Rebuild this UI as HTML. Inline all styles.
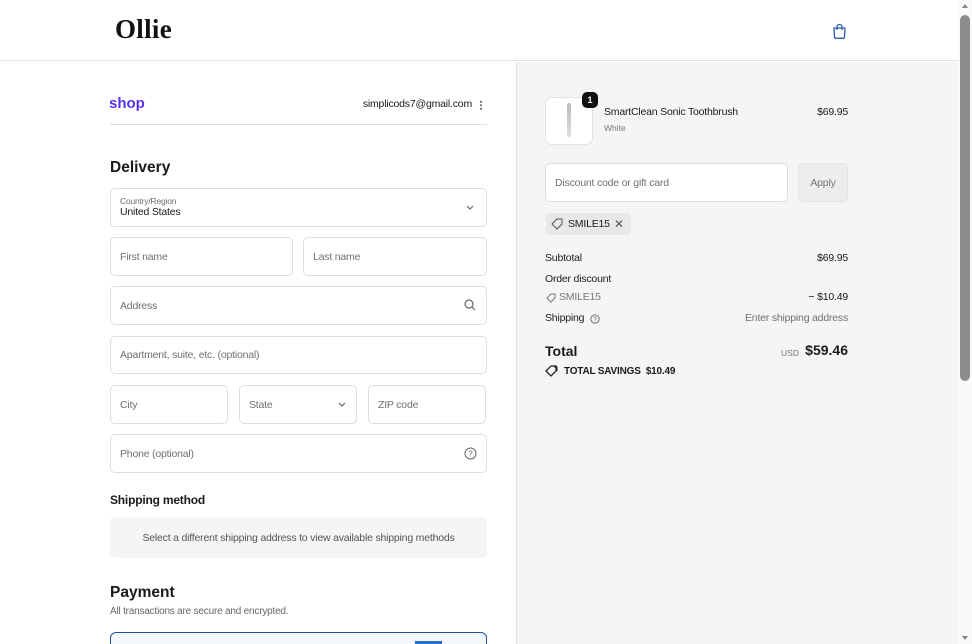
<!DOCTYPE html>
<html><head><meta charset="utf-8"><style>
*{box-sizing:border-box;margin:0;padding:0}
html,body{width:972px;height:644px;overflow:hidden}
body{background:#fff;font-family:"Liberation Sans","DejaVu Sans",sans-serif;color:#1a1a1a;position:relative}
.a{position:absolute;white-space:nowrap}
.inp{position:absolute;border:1px solid #dedede;border-radius:5px;background:#fff;font-size:10.5px;color:#707070;padding-left:9px;display:flex;align-items:center;letter-spacing:-0.2px}
.t11{font-size:10.5px;letter-spacing:-0.2px}
.r{text-align:right}
</style></head><body>
<div class="a" style="left:0;top:0;width:958px;height:61px;border-bottom:1px solid #e1e1e1;background:#fff"></div>
<div class="a" style="left:115px;top:14px;font-family:'Liberation Serif',serif;font-size:27px;font-weight:bold;letter-spacing:0.3px;color:#111">Ollie</div>
<svg class="a" style="left:832px;top:23px" width="15" height="16" viewBox="0 0 15 16"><path d="M2 5h11l-.5 9a1.5 1.5 0 0 1-1.5 1.3H4A1.5 1.5 0 0 1 2.5 14z" fill="none" stroke="#2a5db0" stroke-width="1.3"/><path d="M5 7V4a2.5 2.5 0 0 1 5 0v3" fill="none" stroke="#2a5db0" stroke-width="1.3"/></svg>
<div class="a" style="left:516px;top:62px;width:442px;height:582px;background:#f5f5f5;border-left:1px solid #e1e1e1"></div>
<div class="a" style="left:958px;top:0;width:14px;height:644px;background:#fafafa"></div>
<div class="a" style="left:960px;top:15px;width:10px;height:366px;background:#8c8c8c;border-radius:5px"></div>
<div class="a" style="left:962px;top:4px;width:0;height:0;border:3px solid transparent;border-bottom:4px solid #888;border-top:0"></div>
<div class="a" style="left:962px;top:636px;width:0;height:0;border:3px solid transparent;border-top:4px solid #888;border-bottom:0"></div>

<div class="a" style="left:109px;top:95px;font-size:15px;font-weight:bold;color:#5a31f4">shop</div>
<div class="a t11 r" style="right:500px;top:98px;color:#1a1a1a">simplicods7@gmail.com</div>
<div class="a" style="left:480px;top:100px;width:2px;height:10px;background:radial-gradient(circle,#666 45%,transparent 55%) 0 0/2px 3.5px repeat-y"></div>
<div class="a" style="left:110px;top:124px;width:377px;height:1px;background:#dedede"></div>

<div class="a" style="left:110px;top:159px;font-size:15.5px;font-weight:bold">Delivery</div>
<div class="inp" style="left:110px;top:188px;width:377px;height:39px;display:block;padding-top:7px">
<div style="font-size:8.5px;color:#707070">Country/Region</div><div style="color:#1a1a1a;font-size:10.5px">United States</div></div>
<svg class="a" style="left:466px;top:205px" width="8" height="6"><path d="M1 1l3 3 3-3" fill="none" stroke="#666" stroke-width="1.2"/></svg>
<div class="inp" style="left:110px;top:237px;width:183px;height:39px">First name</div>
<div class="inp" style="left:303px;top:237px;width:184px;height:39px">Last name</div>
<div class="inp" style="left:110px;top:286px;width:377px;height:39px">Address</div>
<svg class="a" style="left:464px;top:299px" width="12" height="12"><circle cx="5" cy="5" r="4" fill="none" stroke="#666" stroke-width="1.2"/><path d="M8 8l3 3" stroke="#666" stroke-width="1.2"/></svg>
<div class="inp" style="left:110px;top:336px;width:377px;height:38px">Apartment, suite, etc. (optional)</div>
<div class="inp" style="left:110px;top:385px;width:118px;height:39px">City</div>
<div class="inp" style="left:239px;top:385px;width:118px;height:39px">State</div>
<svg class="a" style="left:338px;top:402px" width="8" height="6"><path d="M1 1l3 3 3-3" fill="none" stroke="#666" stroke-width="1.2"/></svg>
<div class="inp" style="left:368px;top:385px;width:118px;height:39px">ZIP code</div>
<div class="inp" style="left:110px;top:434px;width:377px;height:39px">Phone (optional)</div>
<svg class="a" style="left:464px;top:447px" width="13" height="13"><circle cx="6.5" cy="6.5" r="5.5" fill="none" stroke="#666" stroke-width="1"/><text x="6.5" y="9.5" font-size="8" text-anchor="middle" fill="#666" font-family="Liberation Sans">?</text></svg>
<div class="a" style="left:110px;top:493px;font-size:12px;font-weight:bold;letter-spacing:-0.2px">Shipping method</div>
<div class="a t11" style="left:110px;top:517px;width:377px;height:41px;background:#f5f5f5;border-radius:5px;color:#555;display:flex;align-items:center;justify-content:center">Select a different shipping address to view available shipping methods</div>
<div class="a" style="left:110px;top:584px;font-size:15.5px;font-weight:bold">Payment</div>
<div class="a" style="left:110px;top:606px;font-size:10px;color:#666;letter-spacing:-0.2px">All transactions are secure and encrypted.</div>
<div class="a" style="left:110px;top:632px;width:377px;height:40px;border:1px solid #1f4f9c;border-radius:6px;background:#f3f6fb"></div>
<div class="a" style="left:415px;top:641px;width:27px;height:5px;background:#2a6bd0"></div>

<div class="a" style="left:545px;top:97px;width:48px;height:48px;background:#fff;border:1px solid #e3e3e3;border-radius:7px"></div>
<div class="a" style="left:567px;top:103px;width:4px;height:34px;background:linear-gradient(#bbb,#ddd);border-radius:2px"></div>
<div class="a" style="left:582px;top:92px;width:16px;height:16px;background:#111;border-radius:5px;color:#fff;font-size:9px;font-weight:bold;text-align:center;line-height:16px">1</div>
<div class="a t11" style="left:604px;top:106px">SmartClean Sonic Toothbrush</div>
<div class="a" style="left:604px;top:123px;font-size:8.5px;color:#777">White</div>
<div class="a t11 r" style="right:124px;top:106px">$69.95</div>
<div class="inp" style="left:545px;top:163px;width:243px;height:39px">Discount code or gift card</div>
<div class="a t11" style="left:798px;top:163px;width:50px;height:39px;background:#ededed;border:1px solid #e3e3e3;border-radius:5px;color:#777;display:flex;align-items:center;justify-content:center">Apply</div>
<div class="a t11" style="left:546px;top:213px;width:85px;height:22px;background:#e8e8e8;border-radius:4px;padding-left:22px;line-height:22px">SMILE15<span style="position:absolute;left:68px;top:0;color:#555;font-size:12px">✕</span></div>
<svg class="a" style="left:551px;top:218px" width="12" height="12"><path d="M6 1h5v5l-5 5-5-5z" fill="none" stroke="#555" stroke-width="1"/></svg>
<div class="a t11" style="left:545px;top:252px">Subtotal</div><div class="a t11 r" style="right:124px;top:252px">$69.95</div>
<div class="a t11" style="left:545px;top:273px">Order discount</div>
<svg class="a" style="left:546px;top:293px" width="10" height="10"><path d="M5 1h4v4l-4 4-4-4z" fill="none" stroke="#777" stroke-width="1"/></svg>
<div class="a t11" style="left:559px;top:291px;color:#777">SMILE15</div><div class="a t11 r" style="right:124px;top:291px">− $10.49</div>
<div class="a t11" style="left:545px;top:312px">Shipping</div>
<svg class="a" style="left:590px;top:314px" width="10" height="10"><circle cx="5" cy="5" r="4.2" fill="none" stroke="#666" stroke-width="0.9"/><text x="5" y="7.5" font-size="7" text-anchor="middle" fill="#666">?</text></svg>
<div class="a t11 r" style="right:124px;top:312px;color:#707070">Enter shipping address</div>
<div class="a" style="left:545px;top:343px;font-size:14px;font-weight:bold">Total</div>
<div class="a" style="left:781px;top:348px;font-size:8.5px;color:#777">USD</div>
<div class="a r" style="right:124px;top:342px;font-size:14px;font-weight:bold">$59.46</div>
<svg class="a" style="left:545px;top:365px" width="14" height="12"><path d="M6 1h5v5l-5 5-5-5z" fill="none" stroke="#222" stroke-width="1.3"/><path d="M9 2l3 0 0 4" fill="none" stroke="#222" stroke-width="1"/></svg>
<div class="a" style="left:564px;top:366px;font-size:10px;font-weight:bold;letter-spacing:-0.2px">TOTAL SAVINGS&nbsp; $10.49</div>
</body></html>
